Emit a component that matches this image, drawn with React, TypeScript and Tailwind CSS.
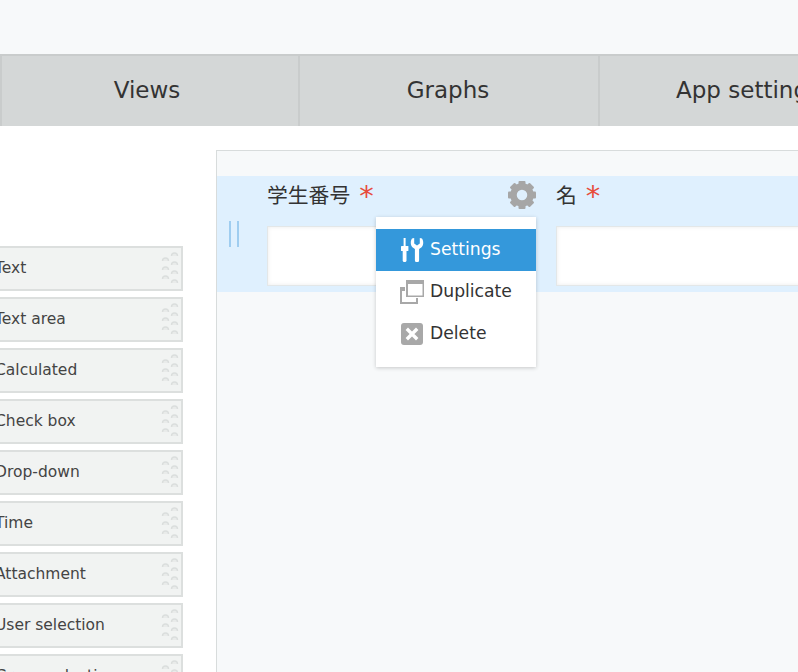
const fieldTypes = [
  "Text",
  "Text area",
  "Calculated",
  "Check box",
  "Drop-down",
  "Time",
  "Attachment",
  "User selection",
  "Group selection",
];

function GripDots() {
  const left = [10, 19, 28];
  const right = [5, 14, 23, 32];
  return (
    <svg width="18" height="40" viewBox="0 0 18 40" fill="#e9ebea" stroke="#dbdedd" strokeWidth="1.4">
      {left.map((y) => (
        <path key={y} d={`M1.5 ${y + 2}a3 3 0 0 1 6 0`} />
      ))}
      {right.map((y) => (
        <path key={y} d={`M10.5 ${y + 2}a3 3 0 0 1 6 0`} />
      ))}
    </svg>
  );
}

function Gear() {
  const teeth = [0, 45, 90, 135, 180, 225, 270, 315];
  return (
    <svg width="30" height="30" viewBox="0 0 30 30" className="shrink-0">
      {teeth.map((a) => (
        <rect key={a} x="11.5" y="1" width="7" height="7" rx="1" fill="#a6a6a6" transform={`rotate(${a} 15 15)`} />
      ))}
      <circle cx="15" cy="15" r="8.5" fill="none" stroke="#a6a6a6" strokeWidth="6.5" />
    </svg>
  );
}

function ToolsIcon() {
  return (
    <svg width="24" height="24" viewBox="0 0 24 24" fill="#fff">
      <rect x="3.6" y="0" width="2" height="9" />
      <rect x="1" y="8" width="7.4" height="5" rx="0.6" />
      <path d="M2.7 13h3.8v9.2a1.9 1.9 0 0 1-3.8 0z" />
      <path d="M12 0.6 L14.2 0 V5.6 L17 7.6 L19.8 5.6 V0 L22 0.6 C23.8 3 23.6 7.2 21.6 9.2 L19.1 11 V22.2 A2.1 2.1 0 0 1 14.9 22.2 V11 L12.4 9.2 C10.4 7.2 10.2 3 12 0.6 Z" />
    </svg>
  );
}

function DuplicateIcon() {
  return (
    <svg width="24" height="24" viewBox="0 0 24 24">
      <rect x="0" y="7" width="18" height="17" fill="#a8a8a8" />
      <rect x="2" y="11" width="14" height="11" fill="#fff" />
      <rect x="5" y="0" width="19" height="18" fill="#fff" />
      <rect x="6" y="0" width="18" height="17" fill="#a8a8a8" />
      <rect x="8" y="4" width="14.5" height="11.5" fill="#fff" />
    </svg>
  );
}

function DeleteIcon() {
  return (
    <svg width="22" height="22" viewBox="0 0 22 22">
      <rect x="0" y="0" width="22" height="22" rx="3" fill="#a8a8a8" />
      <path d="M7 7 L15 15 M15 7 L7 15" stroke="#fff" strokeWidth="3.4" strokeLinecap="square" />
    </svg>
  );
}

function FormField({ label, width }: { label: string; width: string }) {
  return (
    <div className={`flex flex-col ${width}`}>
      <div className="flex h-[50px] items-start pt-[5px] text-[20.8px] leading-[30px] text-[#333]">
        {label}
        <span className="ml-[9px] text-[29px] leading-[30px] text-[#e74c3c]">*</span>
      </div>
      <div className="h-[60px] border border-[#e3e7e8] bg-white shadow-[inset_0_0_4px_rgba(0,0,0,0.08)]" />
    </div>
  );
}

export default function App() {
  return (
    <div
      className="relative h-[672px] w-[798px] overflow-hidden bg-white"
      style={{ fontFamily: '"DejaVu Sans", "Noto Sans CJK JP", sans-serif' }}
    >
      <div className="h-[54px] bg-[#f7f9fa]" />
      <div className="flex h-[72px] border-t-2 border-[#c9cccc] bg-[#d4d7d7]">
        {["Views", "Graphs", "App settings"].map((tab) => (
          <div
            key={tab}
            className="flex w-[300px] shrink-0 items-center justify-center border-r-2 border-r-[#c9cccc] pr-[2px] pb-[2px] text-[23px] text-[#333] first:border-l-2 first:border-l-[#c9cccc] first:pr-[6px]"
          >
            {tab}
          </div>
        ))}
      </div>

      <div className="flex pt-[24px]">
        <div className="flex w-[216px] shrink-0 flex-col gap-[6px] pt-[96px]">
          {fieldTypes.map((name) => (
            <div
              key={name}
              className="-ml-[26px] flex h-[45px] w-[209px] shrink-0 items-center justify-between border-2 border-[#dcdfde] bg-[#f1f3f2] pr-[2px] pl-[19px] text-[15.5px] text-[#444]"
            >
              <span>{name}</span>
              <GripDots />
            </div>
          ))}
        </div>

        <div className="h-[600px] flex-1 border border-[#d8dcdc] bg-[#f7f9fa] pt-[25px]">
          <div className="flex h-[116px] bg-[#dff0fe]">
            <div className="flex w-[50px] shrink-0 gap-[6px] pt-[45px] pl-[12px]">
              <span className="h-[26px] w-[2px] bg-[#9fcdf0]" />
              <span className="h-[26px] w-[2px] bg-[#9fcdf0]" />
            </div>
            <FormField label="学生番号" width="w-[240px] shrink-0" />
            <div className="w-[49px] shrink-0 pt-[4px]">
              <Gear />
            </div>
            <FormField label="名" width="w-[300px] shrink-0" />
          </div>
        </div>
      </div>

      <div className="absolute top-[217px] left-[376px] h-[150px] w-[160px] bg-white pt-[12px] text-[17.2px] text-[#333] shadow-[0_1px_4px_rgba(0,0,0,0.2)]">
        <div className="flex h-[42px] items-center gap-[6px] bg-[#3498db] pl-[24px] text-white">
          <ToolsIcon />
          <span className="-mt-[1px]">Settings</span>
        </div>
        <div className="flex h-[42px] items-center gap-[6px] pl-[24px]">
          <DuplicateIcon />
          <span className="-mt-[1px]">Duplicate</span>
        </div>
        <div className="flex h-[42px] items-center gap-[7px] pl-[25px]">
          <DeleteIcon />
          <span className="-mt-[1px]">Delete</span>
        </div>
      </div>
    </div>
  );
}
